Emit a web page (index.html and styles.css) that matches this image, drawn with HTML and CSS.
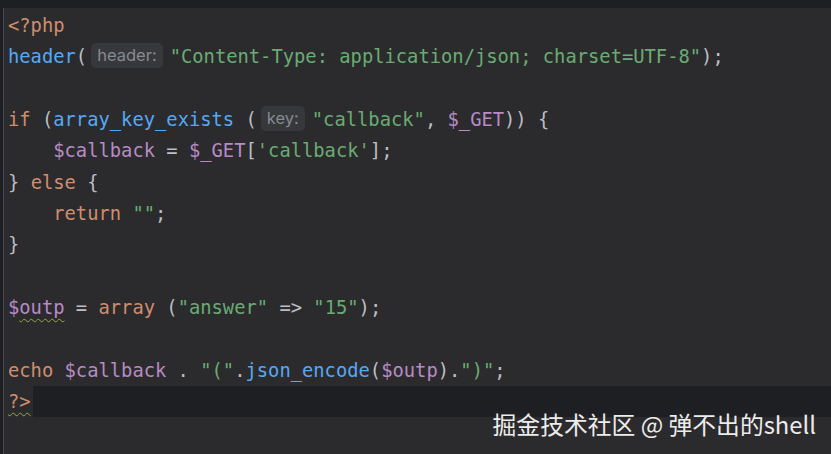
FILE: index.html
```html
<!DOCTYPE html>
<html>
<head>
<meta charset="utf-8">
<link rel="stylesheet" href="styles.css">
</head>
<body>
<div class="topbar"></div>
<div class="editor">
  <div class="gutter"></div>
  <div class="code">
<div class="line"><span class="kw">&lt;?php</span></div>
<div class="line"><span class="fn">header</span>(<span class="hint hint-header">header:</span><span class="str">"Content-Type: application/json; charset=UTF-8"</span>);</div>
<div class="line"></div>
<div class="line"><span class="kw">if</span> (<span class="fn">array_key_exists</span> (<span class="hint hint-key">key:</span><span class="str">"callback"</span>, <span class="var">$_GET</span>)) {</div>
<div class="line">    <span class="var">$callback</span> = <span class="var">$_GET</span>[<span class="str">'callback'</span>];</div>
<div class="line">} <span class="kw">else</span> {</div>
<div class="line">    <span class="kw">return</span> <span class="str">""</span>;</div>
<div class="line">}</div>
<div class="line"></div>
<div class="line"><span class="var">$<span class="wavy">outp</span></span> = <span class="kw">array</span> (<span class="str">"answer"</span> =&gt; <span class="str">"15"</span>);</div>
<div class="line"></div>
<div class="line"><span class="kw">echo</span> <span class="var">$callback</span> . <span class="str">"("</span>.<span class="fn">json_encode</span>(<span class="var">$outp</span>).<span class="str">")"</span>;</div>
<div class="line line-last"><span class="kw wavy">?&gt;</span><span class="caret-row"></span></div>
  </div>
</div>
<div class="watermark">掘金技术社区 @ 弹不出的shell</div>
</body>
</html>
```
FILE: styles.css
```css
html, body {
  margin: 0;
  padding: 0;
}
body {
  width: 831px;
  height: 454px;
  overflow: hidden;
  background: #2b2b2d;
  position: relative;
}
.topbar {
  height: 8px;
  background: #1e1f22;
}
.editor {
  display: flex;
  height: 446px;
}
.gutter {
  width: 3px;
  background: #1e1f22;
  border-right: 1px solid #44464b;
  flex: none;
}
.code {
  flex: 1;
  padding: 2px 0 0 4px;
  font-family: "DejaVu Sans Mono", "Liberation Mono", monospace;
  font-size: 18.8px;
  color: #bcbec4;
}
.line {
  height: 31.35px;
  line-height: 31.35px;
  white-space: pre;
}
.kw { color: #cf8e6d; }
.fn { color: #56a8f5; }
.str { color: #6aab73; }
.var { color: #b88ac6; }
.wavy {
  text-decoration: underline wavy #98a64a;
  text-decoration-thickness: 1px;
  text-underline-offset: 4px;
}
.hint {
  display: inline-block;
  vertical-align: middle;
  font-family: Inter, "Noto Sans", sans-serif;
  font-size: 16.5px;
  color: #868a91;
  background: #36383c;
  border-radius: 5px;
  height: 25px;
  line-height: 25px;
  padding: 0 6px;
  margin: -4px 7px 0 4px;
}
.line-last {
  display: flex;
  align-items: center;
}
.caret-row {
  flex: 1;
  align-self: stretch;
  background: #1e1f22;
  margin-left: 2px;
}
.watermark {
  position: absolute;
  right: 15px;
  top: 408px;
  font-family: "Noto Sans CJK SC", "Noto Sans", sans-serif;
  font-size: 23.8px;
  color: #ececec;
  line-height: 32px;
}
```
